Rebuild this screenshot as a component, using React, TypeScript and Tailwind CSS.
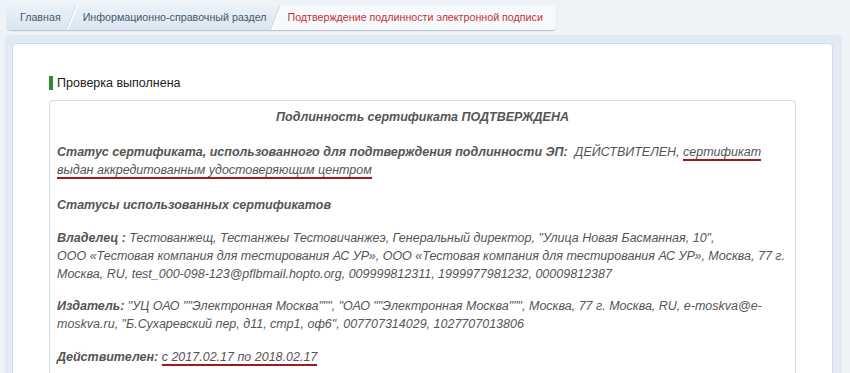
import React from "react";

function Sep({ active }: { active?: boolean }) {
  return (
    <svg width="12" height="25" viewBox="0 0 12 25" className="block shrink-0">
      {active && <polygon points="11.5,0 12,0 12,25 1.5,25" fill="#f7fafc" />}
      <line x1="0.3" y1="25" x2="10.3" y2="0" stroke="#c7d6e2" strokeWidth="1" />
      <line x1="1.5" y1="25" x2="11.5" y2="0" stroke="#ffffff" strokeWidth="1.3" />
    </svg>
  );
}

function Mark({ children }: { children: React.ReactNode }) {
  return <span className="border-b-2 border-[#9e1b1b]">{children}</span>;
}

export default function App() {
  return (
    <div className="min-h-screen bg-[#eef3f8] font-['Liberation_Sans',Arial,sans-serif]">
      {/* breadcrumbs */}
      <div className="pt-[5px] pl-[7px]">
        <nav className="flex h-[25px] w-fit items-stretch rounded-[4px] bg-gradient-to-b from-[#ebf2f8] to-[#dae6f0] text-[10.7px] text-[#45596b] shadow-[0_1px_1px_rgba(70,100,130,0.35)]">
          <a className="flex items-center pl-[13px] pr-[5px]">Главная</a>
          <Sep />
          <a className="flex items-center pl-[5px] pr-[4px]">Информационно-справочный раздел</a>
          <Sep active />
          <span className="flex items-center rounded-r-[4px] bg-[#f7fafc] pl-[5px] pr-[13px] text-[#c4313a]">
            Подтверждение подлинности электронной подписи
          </span>
        </nav>
      </div>

      {/* panel */}
      <div className="mt-[5px] ml-[5px] mr-[8px] rounded-[5px] bg-[#e2ebf4] pt-[8px] pl-[7px] pr-[9px]">
        <div className="rounded-[4px] border border-[#cfdce7] bg-white px-[36px] pt-[30px] pb-[40px]">
          <div className="flex items-center gap-[4px]">
            <div className="h-[14px] w-[4px] bg-[#2f8a35]" />
            <h2 className="text-[12.5px] leading-[18px] text-[#222]">Проверка выполнена</h2>
          </div>

          <div className="mt-[8px] rounded-[4px] border border-[#cfdfe6] px-[7px] pt-[7px] pb-[20px] text-[12.5px] italic leading-[18px] text-[#555] whitespace-nowrap">
            <p className="mb-[17px] text-center font-bold">Подлинность сертификата ПОДТВЕРЖДЕНА</p>

            <p className="mb-[17px]">
              <b>Статус сертификата, использованного для подтверждения подлинности ЭП:</b>
              {"\u00a0 ДЕЙСТВИТЕЛЕН, "}
              <Mark>
                сертификат
                <br />
                выдан аккредитованным удостоверяющим центром
              </Mark>
            </p>

            <p className="mb-[15px] font-bold">Статусы использованных сертификатов</p>

            <p className="mb-[14px]">
              <b>Владелец :</b> Тестованжещ, Тестанжеы Тестовичанжеэ, Генеральный директор, "Улица Новая Басманная, 10",
              <br />
              ООО «Тестовая компания для тестирования АС УР», ООО «Тестовая компания для тестирования АС УР», Москва, 77 г.
              <br />
              Москва, RU, test_000-098-123@pflbmail.hopto.org, 009999812311, 1999977981232, 00009812387
            </p>

            <p className="mb-[15px]">
              <b>Издатель:</b> "УЦ ОАО ""Электронная Москва""", "ОАО ""Электронная Москва""", Москва, 77 г. Москва, RU, e-moskva@e-
              <br />
              moskva.ru, "Б.Сухаревский пер, д11, стр1, оф6", 007707314029, 1027707013806
            </p>

            <p>
              <b>Действителен:</b> <Mark>с 2017.02.17 по 2018.02.17</Mark>
            </p>
          </div>
        </div>
      </div>
    </div>
  );
}
